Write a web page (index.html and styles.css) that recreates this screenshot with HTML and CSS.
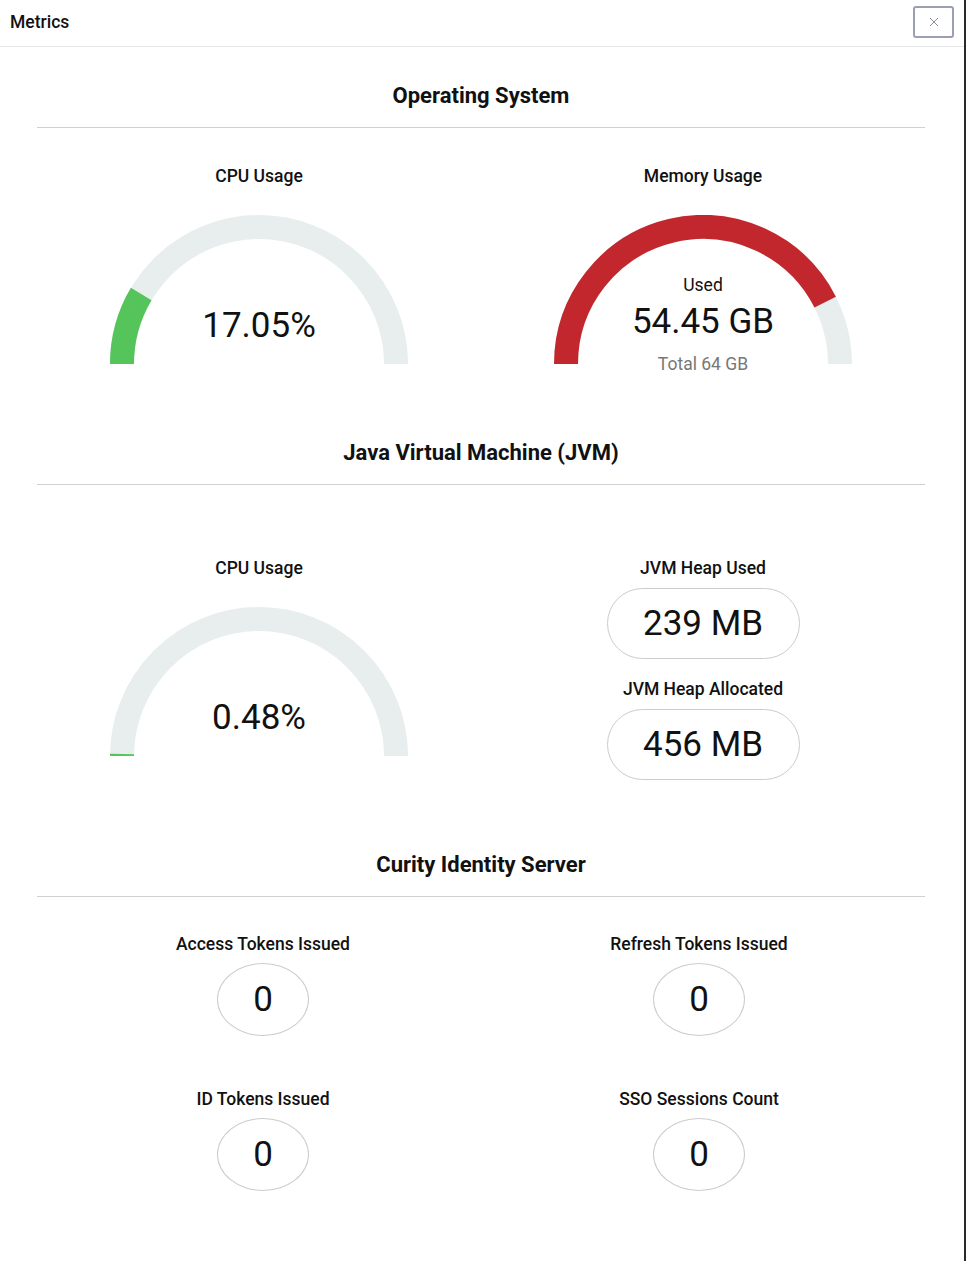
FILE: index.html
```html
<html>
  <head>
    <title>Metrics</title>
    <link rel="stylesheet" href="styles.css">
  </head>
  <body>
    <div class="modal">
      <div class="modal-header">
        <div class="modal-title">Metrics</div>
        <button class="close-button" aria-label="Close"><svg width="10" height="10" viewBox="0 0 10 10"><path d="M1 1L9 9M9 1L1 9" stroke="#8a8c99" stroke-width="1" fill="none"/></svg></button>
      </div>
      <div class="modal-body">

        <div class="section section-os">
          <div class="section-title">Operating System</div>
          <div class="divider"></div>
          <div class="columns">
            <div class="metric">
              <div class="metric-label">CPU Usage</div>
              <div class="gauge">
                <svg width="298" height="150" viewBox="0 0 298 150">
                  <path d="M12 149 A137 137 0 0 1 286 149" stroke="#e8eded" stroke-width="24" fill="none"/>
                  <path d="M12 149 A137 137 0 0 1 31.2 79" stroke="#55c45a" stroke-width="24" fill="none"/>
                </svg>
                <div class="gauge-value">17.05%</div>
              </div>
            </div>
            <div class="metric">
              <div class="metric-label">Memory Usage</div>
              <div class="gauge">
                <svg width="298" height="150" viewBox="0 0 298 150">
                  <path d="M12 149 A137 137 0 0 1 286 149" stroke="#e8eded" stroke-width="24" fill="none"/>
                  <path d="M12 149 A137 137 0 0 1 271.2 87.1" stroke="#c1272d" stroke-width="24" fill="none"/>
                </svg>
                <div class="gauge-caption">Used</div>
                <div class="gauge-value gauge-value-memory">54.45 GB</div>
                <div class="gauge-total">Total 64 GB</div>
              </div>
            </div>
          </div>
        </div>

        <div class="section section-jvm">
          <div class="section-title">Java Virtual Machine (JVM)</div>
          <div class="divider"></div>
          <div class="columns columns-jvm">
            <div class="metric">
              <div class="metric-label">CPU Usage</div>
              <div class="gauge">
                <svg width="298" height="150" viewBox="0 0 298 150">
                  <path d="M12 149 A137 137 0 0 1 286 149" stroke="#e8eded" stroke-width="24" fill="none"/>
                  <path d="M12 149 A137 137 0 0 1 12.02 146.93" stroke="#55c45a" stroke-width="24" fill="none"/>
                </svg>
                <div class="gauge-value">0.48%</div>
              </div>
            </div>
            <div class="metric">
              <div class="metric-label">JVM Heap Used</div>
              <div class="pill">239 MB</div>
              <div class="metric-label metric-label-next">JVM Heap Allocated</div>
              <div class="pill">456 MB</div>
            </div>
          </div>
        </div>

        <div class="section section-curity">
          <div class="section-title">Curity Identity Server</div>
          <div class="divider"></div>
          <div class="columns columns-curity">
            <div class="metric">
              <div class="metric-label">Access Tokens Issued</div>
              <div class="counter">0</div>
            </div>
            <div class="metric">
              <div class="metric-label">Refresh Tokens Issued</div>
              <div class="counter">0</div>
            </div>
            <div class="metric">
              <div class="metric-label">ID Tokens Issued</div>
              <div class="counter">0</div>
            </div>
            <div class="metric">
              <div class="metric-label">SSO Sessions Count</div>
              <div class="counter">0</div>
            </div>
          </div>
        </div>

      </div>
    </div>
  </body>
</html>
```

FILE: styles.css
```css
* {
  box-sizing: border-box;
}
html {
  background-color: #ffffff;
}
body {
  margin: 0;
  font-family: Roboto, "Liberation Sans", sans-serif;
  color: #111111;
}
.modal {
  width: 966px;
  min-height: 1261px;
  border-right: 2px solid #2a2a2e;
  background-color: #ffffff;
}
.modal-header {
  height: 47px;
  display: flex;
  justify-content: space-between;
  align-items: flex-start;
  padding: 0 10px 0 10px;
  border-bottom: 1px solid #e8e8e8;
}
.modal-title {
  font-size: 17.5px;
  font-weight: 500;
  line-height: 20px;
  margin-top: 12px;
}
.close-button {
  width: 41px;
  height: 32px;
  margin-top: 6px;
  border: 2px solid #9c9fb3;
  border-radius: 3px;
  background: #ffffff;
  padding: 0;
  display: flex;
  align-items: center;
  justify-content: center;
}
.modal-body {
  width: 888px;
  margin-left: 37px;
}
.section-title {
  font-size: 22px;
  font-weight: 700;
  line-height: 24px;
  text-align: center;
}
.section-os {
  padding-top: 37px;
}
.section-jvm {
  padding-top: 76px;
}
.section-curity {
  padding-top: 73px;
}
.divider {
  height: 1px;
  background-color: #d0d0d0;
  margin-top: 19px;
}
.columns {
  display: grid;
  grid-template-columns: 1fr 1fr;
  margin-top: 38px;
}
.columns-jvm {
  margin-top: 73px;
}
.columns-curity {
  margin-top: 37px;
  padding: 0 8px;
  row-gap: 53px;
}
.metric {
  display: flex;
  flex-direction: column;
  align-items: center;
}
.metric-label {
  font-size: 17.5px;
  font-weight: 500;
  line-height: 20px;
}
.metric-label-next {
  margin-top: 20px;
}
.gauge {
  position: relative;
  width: 298px;
  height: 150px;
  margin-top: 29px;
}
.gauge svg {
  display: block;
}
.gauge-value {
  position: absolute;
  left: 0;
  right: 0;
  top: 90px;
  text-align: center;
  font-size: 35px;
  line-height: 42px;
}
.gauge-value-memory {
  top: 86px;
}
.gauge-caption {
  position: absolute;
  left: 0;
  right: 0;
  top: 60px;
  text-align: center;
  font-size: 17.5px;
  line-height: 20px;
}
.gauge-total {
  position: absolute;
  left: 0;
  right: 0;
  top: 139px;
  text-align: center;
  font-size: 17.5px;
  line-height: 20px;
  color: #777777;
}
.pill {
  width: 193px;
  height: 71px;
  margin-top: 10px;
  border: 1px solid #cccccc;
  border-radius: 36px;
  display: flex;
  align-items: center;
  justify-content: center;
  font-size: 35px;
}
.counter {
  width: 92px;
  height: 73px;
  margin-top: 9px;
  border: 1px solid #cccccc;
  border-radius: 50%;
  display: flex;
  align-items: center;
  justify-content: center;
  font-size: 35px;
}
```
